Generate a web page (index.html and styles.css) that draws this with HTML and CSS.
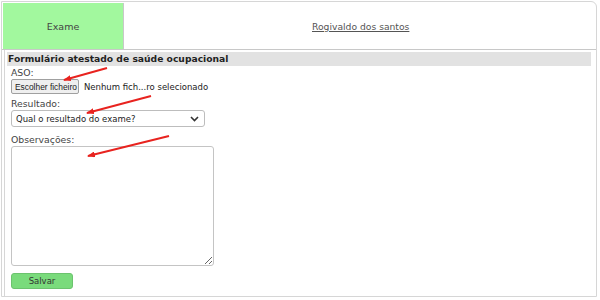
FILE: index.html
```html
<!DOCTYPE html>
<html>
<head>
  <title>Exame</title>
  <link rel="stylesheet" href="styles.css">
</head>
<body>

  <div class="card">
    <div class="tabs">
      <div class="tab active">Exame</div>
      <div class="tab name"><a href="#">Rogivaldo dos santos</a></div>
    </div>

    <div class="panel">
      <div class="panel-title">Formulário atestado de saúde ocupacional</div>

      <label class="field-label first" for="aso">ASO:</label>
      <div class="file-row">
        <button class="file-btn" id="aso">Escolher ficheiro</button>
        <span class="file-name">Nenhum fich...ro selecionado</span>
      </div>

      <label class="field-label" for="resultado">Resultado:</label>
      <div class="select" id="resultado">
        <span>Qual o resultado do exame?</span>
        <svg width="9" height="6" viewBox="0 0 9 6"><path d="M1 1 L4.5 4.5 L8 1" fill="none" stroke="#333" stroke-width="1.6"/></svg>
      </div>

      <label class="field-label obs" for="obs">Observações:</label>
      <textarea id="obs"></textarea>

      <button class="save">Salvar</button>
    </div>

    <!-- red arrows drawn on top of the screenshot -->
    <svg class="arrows" width="600" height="300" viewBox="0 0 600 300">
      <defs>
        <marker id="head" markerWidth="8" markerHeight="6" refX="7" refY="3" orient="auto" markerUnits="userSpaceOnUse">
          <path d="M0 0 L8 3 L0 6 Z" fill="#e8231f"/>
        </marker>
      </defs>
      <line x1="107" y1="68" x2="64" y2="80" stroke="#e8231f" stroke-width="2" marker-end="url(#head)"/>
      <line x1="151" y1="96" x2="87" y2="113" stroke="#e8231f" stroke-width="2" marker-end="url(#head)"/>
      <line x1="169" y1="136" x2="88" y2="156" stroke="#e8231f" stroke-width="2" marker-end="url(#head)"/>
    </svg>
  </div>

</body>
</html>
```

FILE: styles.css
```css
body {
  margin: 0;
  font-family: 'DejaVu Sans', Verdana, sans-serif;
  font-size: 9.2px;
  color: #333;
  background-color: white;
}

.card {
  position: relative;
  width: 596px;
  height: 296px;
  margin: 1px 0 0 1px;
  border: 1px solid #d6d6d6;
  border-radius: 0 6px 0 0;
  box-sizing: border-box;
  display: flex;
  flex-direction: column;
}

.tabs {
  display: flex;
  height: 46px;
  border-bottom: 1px solid #c8c8c8;
  padding: 1px 0 0 1px;
}

.tab {
  display: flex;
  align-items: center;
}

.tab.active {
  width: 120px;
  justify-content: center;
  background-color: #a2f89e;
  border-right: 1px solid #c8c8c8;
  font-size: 9.5px;
  color: #444;
}

.tab.name {
  flex: 1;
  padding-left: 188px;
}

.tab.name a {
  color: #555;
  font-size: 9.2px;
}

.panel {
  flex: 1;
  margin-left: 2px;
  border-left: 1px solid #d6d6d6;
  padding: 2px 4px 0 2px;
  display: flex;
  flex-direction: column;
  align-items: flex-start;
}

.panel-title {
  align-self: stretch;
  height: 14px;
  line-height: 14px;
  box-sizing: border-box;
  background-color: #e2e2e2;
  font-weight: bold;
  font-size: 9.2px;
  color: #222;
  padding-left: 1px;
  margin-right: 1px;
}

.field-label {
  margin: 3px 0 0 4px;
  line-height: 13px;
  font-size: 9.3px;
  color: #444;
}

.field-label.first {
  margin-top: 0;
}

.field-label.obs {
  margin-top: 6px;
}

.file-row {
  display: flex;
  align-items: center;
  gap: 5px;
  margin-left: 4px;
  height: 15px;
}

.file-btn {
  font-family: 'Liberation Sans', Arial, sans-serif;
  font-size: 8.4px;
  white-space: nowrap;
  color: #222;
  background-color: #efefef;
  border: 1px solid #a0a0a0;
  border-radius: 2px;
  padding: 0 3px;
  height: 15px;
  width: 68px;
}

.file-name {
  font-size: 8.5px;
  color: #222;
}

.select {
  margin: 0 0 0 4px;
  width: 194px;
  height: 17px;
  box-sizing: border-box;
  border: 1px solid #bdbdbd;
  border-radius: 3px;
  display: flex;
  align-items: center;
  justify-content: space-between;
  padding: 0 5px 0 4px;
  font-size: 8.5px;
  color: #222;
}

textarea {
  margin: 0 0 0 4px;
  width: 203px;
  height: 120px;
  box-sizing: border-box;
  border: 1px solid #c4c4c4;
  border-radius: 3px;
}

.save {
  margin: 7px 0 0 4px;
  width: 62px;
  height: 16px;
  background-color: #7adb7c;
  border: 1px solid #6cc36e;
  border-radius: 3px;
  font-family: 'DejaVu Sans', Verdana, sans-serif;
  font-size: 8.5px;
  color: #333;
}

.arrows {
  position: absolute;
  left: -2px;
  top: -2px;
  pointer-events: none;
}
```
